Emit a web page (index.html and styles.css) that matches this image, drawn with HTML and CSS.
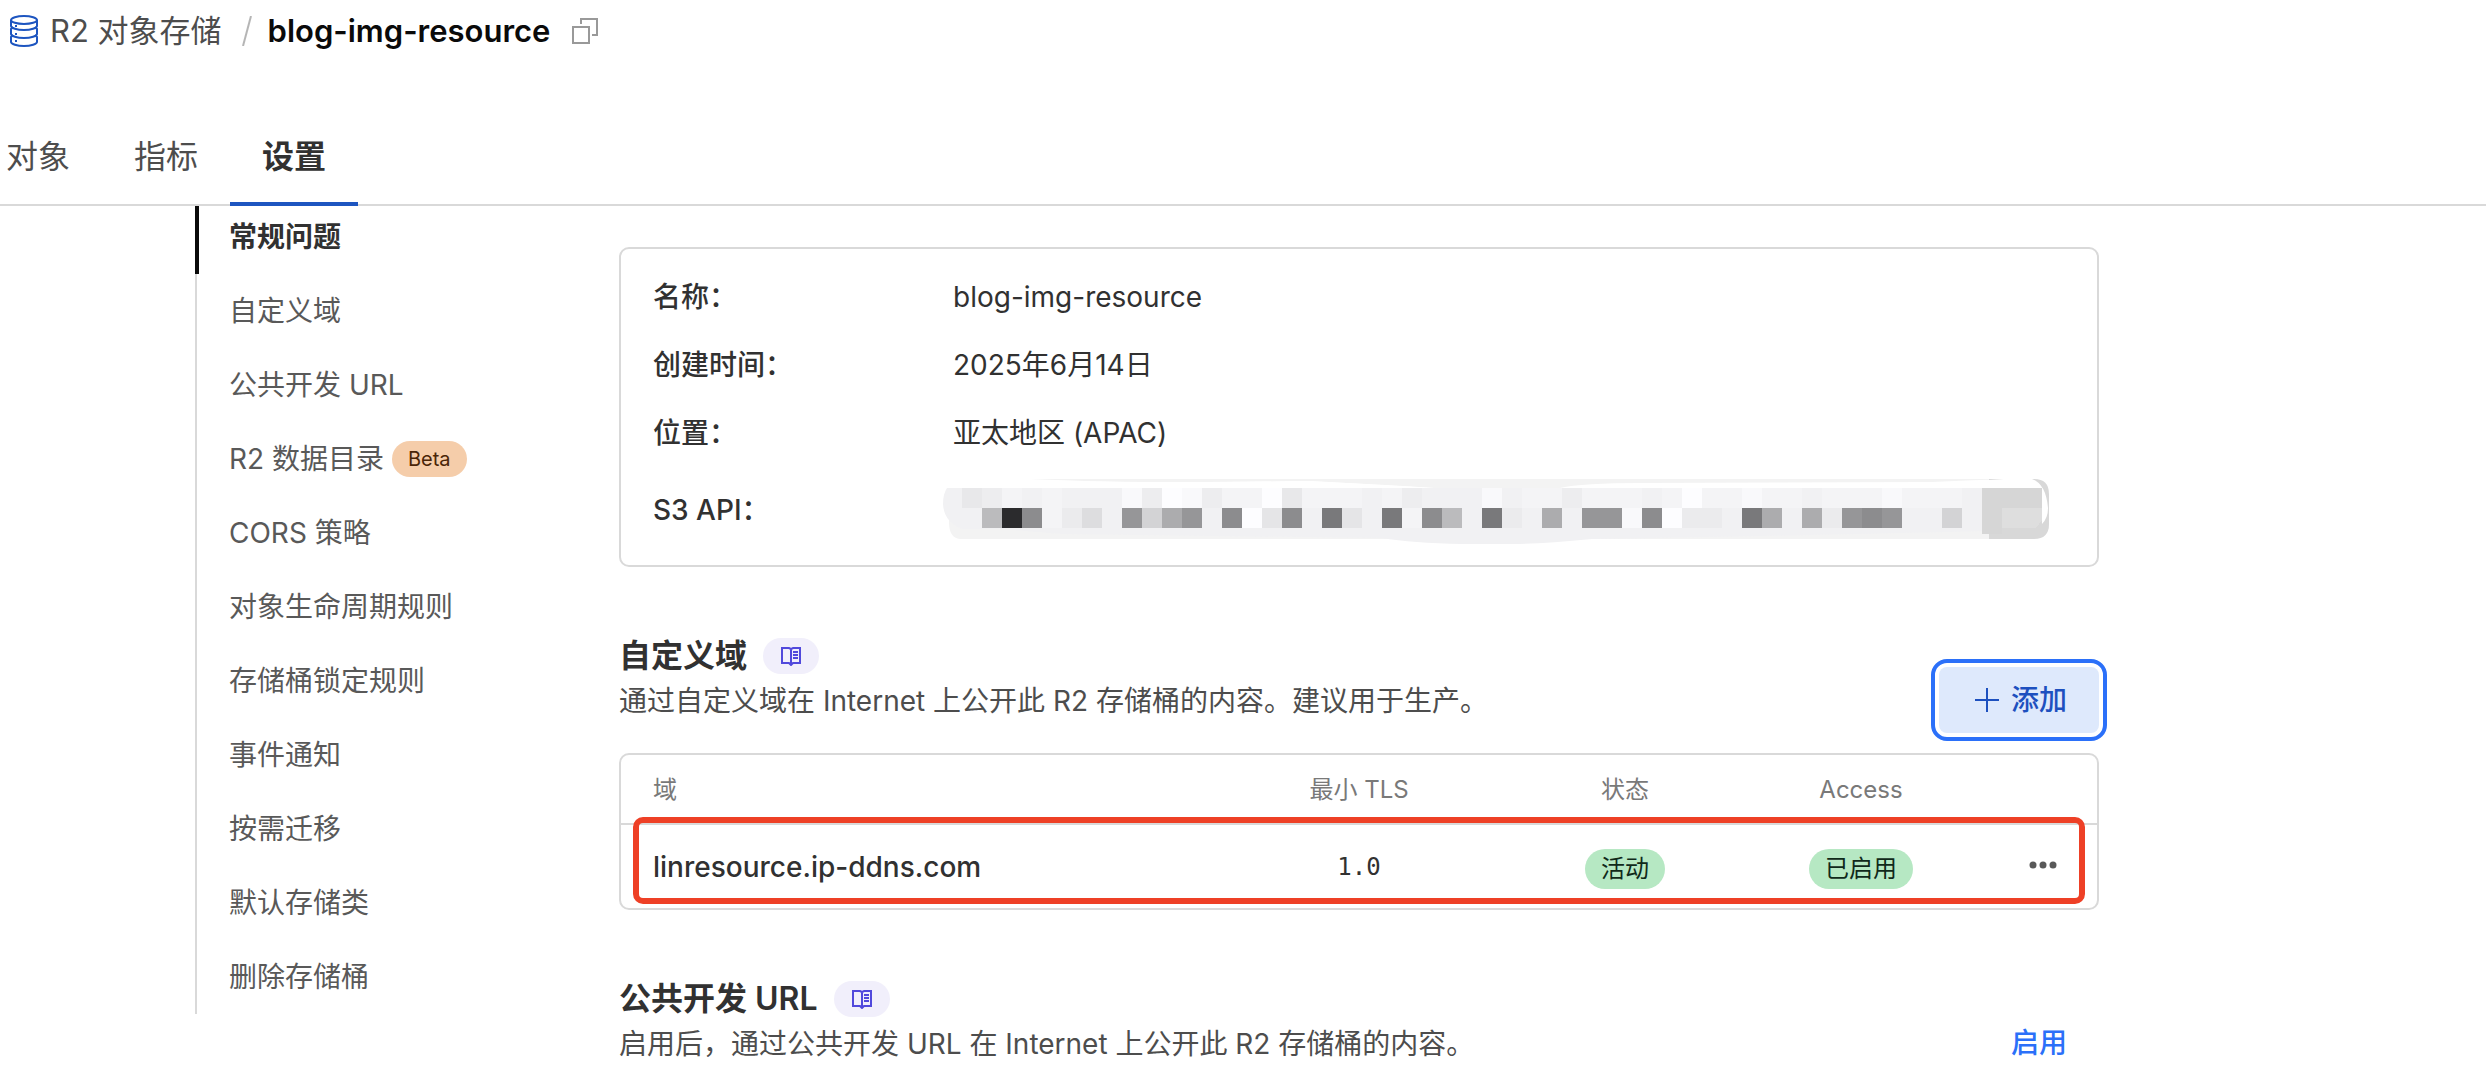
FILE: index.html
```
<!DOCTYPE html>
<html lang="zh-CN">
<head>
    <meta charset="UTF-8">
    <meta name="viewport" content="width=device-width, initial-scale=1.0">
    <title>blog-img-resource - R2 对象存储</title>
    <link rel="stylesheet" href="styles.css">
</head>
<body>
    <header class="header">
        <div class="breadcrumb">
            <svg class="db-icon" width="28" height="32" viewBox="0 0 28 32" fill="none" stroke="#1d55c0" stroke-width="2">
                <ellipse cx="14" cy="5" rx="13" ry="4"/>
                <path d="M1 5v6c0 2 6 4 13 4s13-2 13-4V5"/>
                <path d="M3 12l-2 2v5c0 2 6 4 13 4s13-2 13-4v-5l-2-2"/>
                <path d="M3 20l-2 2v5c0 2 6 4 13 4s13-2 13-4v-5l-2-2"/>
                <path d="M5 11h2M5 19h2M5 26h2"/>
            </svg>
            <a class="crumb-link" href="#">R2 对象存储</a>
            <svg width="10" height="30" viewBox="0 0 10 30" stroke="#b5b5b5" stroke-width="2"><path d="M9 0L1 30"/></svg>
            <h1>blog-img-resource</h1>
            <button class="copy-btn" type="button" aria-label="复制">
                <svg width="26" height="26" viewBox="0 0 26 26" fill="none" stroke="#999" stroke-width="2">
                    <path d="M1 9h16v16H1zM9 6V1h16v16h-5"/>
                </svg>
            </button>
        </div>
        <nav class="tabs">
            <a href="#">对象</a>
            <a href="#">指标</a>
            <a class="active" href="#">设置</a>
        </nav>
    </header>

    <div class="page">
        <nav class="sidebar">
            <a class="active" href="#">常规问题</a>
            <a href="#">自定义域</a>
            <a href="#">公共开发 URL</a>
            <a href="#">R2 数据目录 <span class="beta">Beta</span></a>
            <a href="#">CORS 策略</a>
            <a href="#">对象生命周期规则</a>
            <a href="#">存储桶锁定规则</a>
            <a href="#">事件通知</a>
            <a href="#">按需迁移</a>
            <a href="#">默认存储类</a>
            <a href="#">删除存储桶</a>
        </nav>

        <main class="content">
            <dl class="card">
                <div class="row">
                    <dt>名称：</dt>
                    <dd>blog-img-resource</dd>
                </div>
                <div class="row">
                    <dt>创建时间：</dt>
                    <dd>2025年6月14日</dd>
                </div>
                <div class="row">
                    <dt>位置：</dt>
                    <dd>亚太地区 (APAC)</dd>
                </div>
                <div class="row row-api">
                    <dt>S3 API：</dt>
                    <dd>
                        <!-- redacted endpoint -->
                        <svg class="redacted" width="1110" height="68" viewBox="0 0 1110 68" shape-rendering="crispEdges">
                            <g shape-rendering="auto">
                                <path fill="#f3f3f3" d="M88 1H1047V61H18Q7 60 7 44V30H400V10H492Q400 4 350 3Q200 6 88 1Z"/>
                                <path fill="#fff" d="M80 2Q200 6 370 3L492 10H80ZM618 10Q640 5 700 5L990 4Q1030 2 1070 1L1095 10Z"/>
                                <path fill="#d8d8d8" d="M1047 1H1092Q1107 1 1107 16V46Q1107 61 1092 61H1047Z"/>
                                <path fill="#fff" d="M1047 2Q1070 0 1090 1Q1104 6 1106 30Q1106 40 1100 46V10H1047Z"/>
                                <path fill="#f1f1f3" d="M5 10H1047V53L820 58L650 61Q600 66 570 66H520Q470 65 440 60L120 56L60 51H20Q2 44 1 26Q1 16 5 10Z"/>
                            </g>
                            <path fill="#e8e8ea" d="M20 10h20v20H20zM340 10h20v20H340z"/>
                            <path fill="#ededef" d="M40 10h20v20H40zM200 10h20v20H200zM260 10h20v20H260zM460 10h20v20H460zM620 10h20v20H620z"/>
                            <path fill="#f4f4f6" d="M60 10h20v20H60zM100 10h20v20H100zM280 10h40v20H280zM360 10h60v20H360zM440 10h20v20H440zM580 10h40v20H580zM640 10h60v20H640zM720 10h20v20H720zM760 10h40v20H760zM820 10h40v20H820zM880 10h60v20H880zM960 10h60v20H960zM460 30h20v20H460zM100 30h20v20H100z"/>
                            <path fill="#f9f9fb" d="M180 10h20v20H180zM240 10h20v20H240zM540 10h20v20H540zM800 10h20v20H800zM940 10h20v20H940zM680 30h20v20H680z"/>
                            <path fill="#fdfdff" d="M220 10h20v20H220zM320 10h20v20H320zM740 10h20v20H740zM300 30h20v20H300zM720 30h20v20H720z"/>
                            <path fill="#bbbbbd" d="M40 30h20v20H40zM500 30h20v20H500z"/>
                            <path fill="#2b2b2d" d="M60 30h20v20H60z"/>
                            <path fill="#8c8c8e" d="M80 30h20v20H80zM280 30h20v20H280zM340 30h20v20H340zM480 30h20v20H480zM700 30h20v20H700zM920 30h20v20H920z"/>
                            <path fill="#ebebed" d="M120 30h20v20H120zM560 30h20v20H560zM740 30h40v20H740zM880 30h20v20H880z"/>
                            <path fill="#dddddf" d="M140 30h20v20H140z"/>
                            <path fill="#969698" d="M180 30h20v20H180zM240 30h20v20H240zM640 30h40v20H640zM900 30h20v20H900zM940 30h20v20H940z"/>
                            <path fill="#d3d3d5" d="M200 30h20v20H200zM1000 30h20v20H1000z"/>
                            <path fill="#acacae" d="M220 30h20v20H220zM600 30h20v20H600zM820 30h20v20H820zM860 30h20v20H860z"/>
                            <path fill="#e5e5e7" d="M320 30h20v20H320zM400 30h20v20H400z"/>
                            <path fill="#79797b" d="M380 30h20v20H380zM440 30h20v20H440zM540 30h20v20H540zM800 30h20v20H800z"/>
                            <path fill="#d6d6d6" d="M1040 10h60v20H1060v26H1040z"/>
                            <path fill="#dedede" d="M1060 30h40v12l-6 8H1060z"/>
                        </svg>
                    </dd>
                </div>
            </dl>

            <section class="section">
                <div class="section-head">
                    <div>
                        <h2>自定义域
                            <a class="docs" href="#" aria-label="文档">
                                <svg width="20" height="20" viewBox="0 0 20 20" fill="none" stroke="#5149dc" stroke-width="2">
                                    <path d="M10 3L8 2H1v15h7l2 2 2-2h7V2h-7l-2 1v16M12 6h5M12 9h5M12 12h5"/>
                                </svg>
                            </a>
                        </h2>
                        <p>通过自定义域在 Internet 上公开此 R2 存储桶的内容。建议用于生产。</p>
                    </div>
                    <button class="add-btn" type="button">
                        <svg width="24" height="24" viewBox="0 0 24 24" stroke="currentColor" stroke-width="2"><path d="M12 0v24M0 12h24"/></svg>
                        添加
                    </button>
                </div>
                <div class="table-box">
                    <table>
                        <colgroup>
                            <col>
                            <col class="col-tls">
                            <col class="col-status">
                            <col class="col-access">
                            <col class="col-menu">
                        </colgroup>
                        <thead>
                            <tr>
                                <th>域</th>
                                <th>最小 TLS</th>
                                <th>状态</th>
                                <th>Access</th>
                                <th></th>
                            </tr>
                        </thead>
                        <tbody>
                            <tr>
                                <td>linresource.ip-ddns.com</td>
                                <td class="mono">1.0</td>
                                <td><span class="pill">活动</span></td>
                                <td><span class="pill">已启用</span></td>
                                <td>
                                    <button class="menu-btn" type="button" aria-label="更多">
                                        <svg width="28" height="8" viewBox="0 0 28 8" fill="#595959"><circle cx="4" cy="4" r="3.5"/><circle cx="14" cy="4" r="3.5"/><circle cx="24" cy="4" r="3.5"/></svg>
                                    </button>
                                </td>
                            </tr>
                        </tbody>
                    </table>
                    <div class="highlight"></div>
                </div>
            </section>

            <section class="section">
                <div class="section-head">
                    <div>
                        <h2>公共开发 URL
                            <a class="docs" href="#" aria-label="文档">
                                <svg width="20" height="20" viewBox="0 0 20 20" fill="none" stroke="#5149dc" stroke-width="2">
                                    <path d="M10 3L8 2H1v15h7l2 2 2-2h7V2h-7l-2 1v16M12 6h5M12 9h5M12 12h5"/>
                                </svg>
                            </a>
                        </h2>
                        <p>启用后，通过公共开发 URL 在 Internet 上公开此 R2 存储桶的内容。</p>
                    </div>
                    <button class="enable-btn" type="button">启用</button>
                </div>
            </section>
        </main>
    </div>
</body>
</html>
```
FILE: styles.css
```
* {
    margin: 0;
    padding: 0;
    box-sizing: border-box;
}
body {
    font-family: Inter, "Noto Sans CJK SC", sans-serif;
    font-size: 28px;
    line-height: 44px;
    color: #313131;
    background-color: #fff;
}
a {
    color: inherit;
    text-decoration: none;
}
button {
    font: inherit;
    border: none;
    background: none;
    cursor: pointer;
}
svg {
    display: block;
    flex-shrink: 0;
}

/* Header */
.header {
    border-bottom: 2px solid #d9d9d9;
}
.breadcrumb {
    display: flex;
    align-items: center;
    height: 62px;
    padding-left: 10px;
    font-size: 31px;
}
.crumb-link {
    margin: 0 20px 0 12px;
    color: #4d4d4d;
}
.breadcrumb h1 {
    margin: 0 22px 0 16px;
    font-size: 31px;
    font-weight: 600;
    color: #0a0a0a;
}
.tabs {
    display: flex;
    margin-top: 46px;
    margin-bottom: -2px;
    padding-left: 6px;
    font-size: 32px;
    color: #4d4d4d;
}
.tabs a {
    padding: 27px 32px 23px;
    border-bottom: 4px solid transparent;
}
.tabs a:first-child {
    padding-left: 0;
}
.tabs .active {
    color: #313131;
    font-weight: 600;
    border-bottom-color: #1d55c0;
}

/* Layout */
.page {
    display: flex;
    align-items: flex-start;
    padding: 0 387px 0 195px;
}
.sidebar {
    flex: 0 0 424px;
    border-left: 2px solid #d9d9d9;
    color: #595959;
}
.sidebar a {
    display: flex;
    align-items: center;
    padding: 15px 0 15px 32px;
}
.sidebar .active {
    margin-left: -2px;
    padding-top: 9px;
    padding-left: 30px;
    border-left: 4px solid #0a0a0a;
    color: #313131;
    font-weight: 600;
}
.beta {
    margin-left: 8px;
    padding: 0 16px;
    border-radius: 18px;
    background-color: #f5cdaa;
    color: #4a2507;
    font-size: 20px;
    line-height: 36px;
}
.content {
    flex: 1;
    min-width: 0;
    padding-top: 41px;
}

/* Card */
.card {
    padding: 14px 32px 12px;
    border: 2px solid #d9d9d9;
    border-radius: 10px;
}
.row {
    display: flex;
    align-items: center;
    height: 68px;
}
.row-api {
    height: 86px;
}
.row dt {
    flex: 0 0 300px;
    font-weight: 500;
}
.redacted {
    margin-top: 4px;
    margin-left: -11px;
}

/* Sections */
.section {
    margin-top: 66px;
}
.section-head {
    display: flex;
    justify-content: space-between;
    align-items: flex-end;
    height: 100px;
}
.section-head > div {
    align-self: flex-start;
}
.section h2 {
    display: flex;
    align-items: center;
    font-size: 32px;
    font-weight: 600;
    line-height: 46px;
}
.section p {
    color: #4d4d4d;
}
.docs {
    display: flex;
    align-items: center;
    justify-content: center;
    width: 56px;
    height: 36px;
    margin-left: 16px;
    border-radius: 18px;
    background-color: #f1effb;
}
.add-btn {
    display: flex;
    align-items: center;
    justify-content: center;
    gap: 12px;
    width: 160px;
    height: 66px;
    padding-left: 4px;
    border-radius: 8px;
    outline: 4px solid #2b70f9;
    outline-offset: 4px;
    background-color: #dee9fc;
    color: #1d50bf;
    font-weight: 500;
}
.enable-btn {
    height: 66px;
    padding: 0 32px;
    color: #2b70f9;
    font-weight: 500;
}

/* Table */
.table-box {
    position: relative;
    margin-top: 20px;
    border: 2px solid #d9d9d9;
    border-radius: 10px;
}
table {
    width: 100%;
    border-collapse: collapse;
    table-layout: fixed;
}
.col-tls {
    width: 316px;
}
.col-status {
    width: 216px;
}
.col-access {
    width: 256px;
}
.col-menu {
    width: 108px;
}
th {
    height: 69px;
    padding-top: 2px;
    border-bottom: 2px solid #d9d9d9;
    color: #797979;
    font-size: 24px;
    font-weight: 400;
}
td {
    height: 84px;
    font-weight: 500;
    text-align: center;
}
th:first-child, td:first-child {
    padding-left: 32px;
    text-align: left;
}
.mono {
    font-family: "DejaVu Sans Mono", monospace;
    font-size: 24px;
    font-weight: 400;
}
.pill {
    display: inline-block;
    padding: 0 16px;
    border-radius: 20px;
    background-color: #b6e8c3;
    color: #10291a;
    font-size: 24px;
    font-weight: 400;
    line-height: 40px;
    vertical-align: middle;
}
.menu-btn {
    padding: 4px 0 12px;
    vertical-align: middle;
}
/* Red frame over the domain row */
.highlight {
    position: absolute;
    top: 62px;
    right: 12px;
    bottom: 4px;
    left: 12px;
    border: 6px solid #ee4026;
    border-radius: 10px;
    pointer-events: none;
}
```
